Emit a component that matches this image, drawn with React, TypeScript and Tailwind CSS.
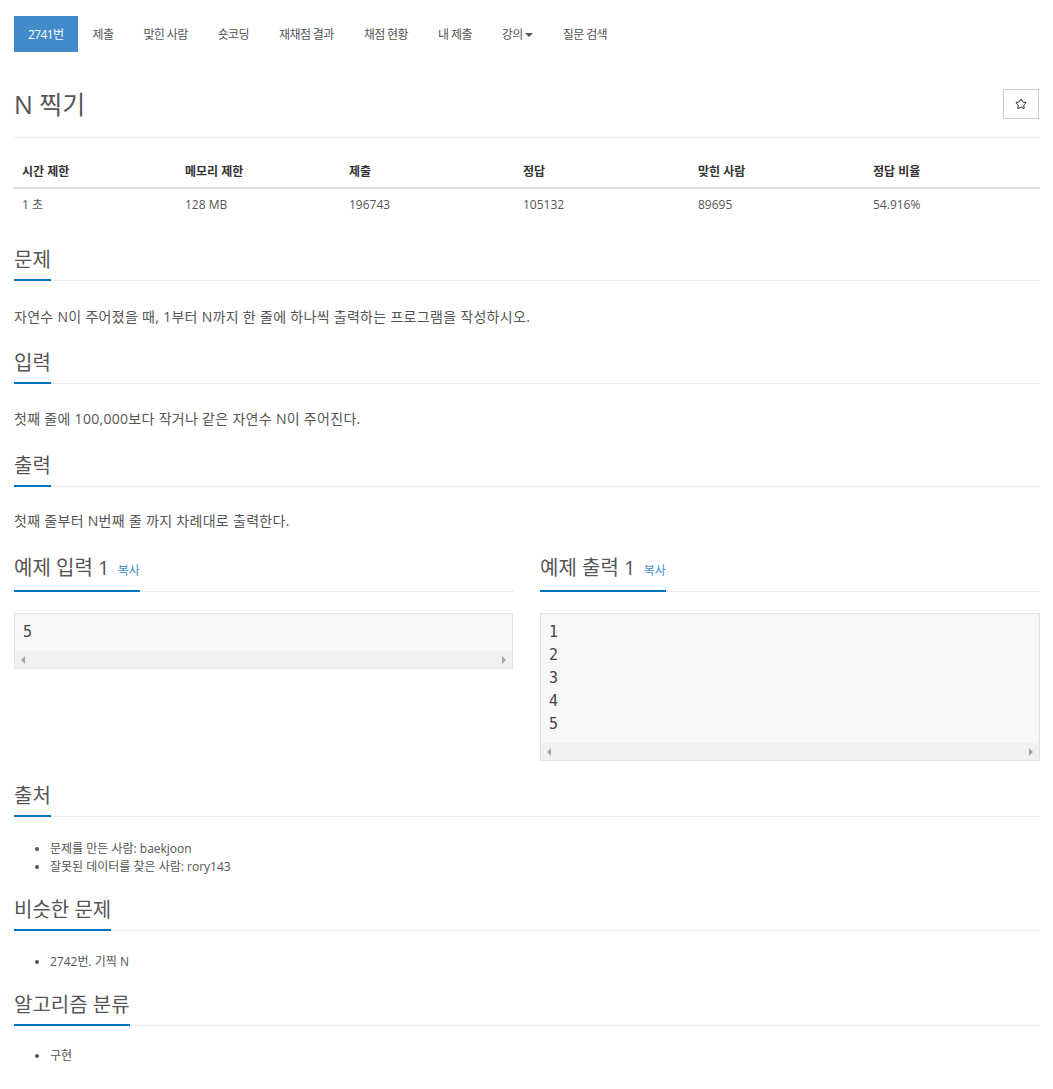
import { Star } from 'lucide-react'

const navItems = ['제출', '맞힌 사람', '숏코딩', '재채점 결과', '채점 현황', '내 제출', '강의', '질문 검색']

const stats = [
  { head: '시간 제한', value: '1 초', w: 'w-[163px]' },
  { head: '메모리 제한', value: '128 MB', w: 'w-[164px]' },
  { head: '제출', value: '196743', w: 'w-[174px]' },
  { head: '정답', value: '105132', w: 'w-[175px]' },
  { head: '맞힌 사람', value: '89695', w: 'w-[175px]' },
  { head: '정답 비율', value: '54.916%', w: 'flex-1' },
]

function Heading({ children, className = '' }: { children: React.ReactNode; className?: string }) {
  return (
    <div className={`flex border-b border-dotted border-[#ddd] ${className}`}>
      <h3 className="-mb-px border-b-2 border-[#0076c0] pb-[5px] text-[20px] leading-[28px] font-normal text-[#555]">
        {children}
      </h3>
    </div>
  )
}

function SampleBox({ lines }: { lines: string[] }) {
  return (
    <div className="mt-[21px] border border-[#e1e1e8] bg-[#f7f7f9]">
      <pre className="px-[8px] py-[7px] font-['DejaVu_Sans_Mono',monospace] text-[15px] leading-[23px] text-[#444]">
        {lines.join('\n')}
      </pre>
      <div className="flex h-[17px] items-center justify-between bg-[#f1f1f1] px-[6px]">
        <span className="h-0 w-0 border-y-[4px] border-r-[4px] border-y-transparent border-r-[#a3a3a3]" />
        <span className="h-0 w-0 border-y-[4px] border-l-[4px] border-y-transparent border-l-[#a3a3a3]" />
      </div>
    </div>
  )
}

export default function App() {
  return (
    <div className="min-h-screen bg-white pl-[14px] pr-[13px] font-['Open_Sans','Noto_Sans_CJK_KR',sans-serif] text-[#555]">
      {/* problem menu */}
      <ul className="mt-[16px] flex text-[12px] tracking-[-0.6px]">
        <li className="h-[36px] bg-[#428bca] px-[14px] leading-[37px] text-white">2741번</li>
        {navItems.map((item) => (
          <li key={item} className="flex h-[36px] items-center px-[15px] pt-px text-[#555]">
            {item}
            {item === '강의' && (
              <span className="ml-[2px] h-0 w-0 border-x-[4px] border-t-[4px] border-x-transparent border-t-[#555]" />
            )}
          </li>
        ))}
      </ul>

      {/* title */}
      <div className="mt-[37px] flex items-center justify-between border-b border-[#eee] pb-[18px]">
        <h1 className="text-[25px] leading-[30px] text-[#555]">N 찍기</h1>
        <button className="mr-px flex h-[30px] w-[36px] items-center justify-center border border-[#ccc] bg-white">
          <Star size={12} strokeWidth={2} className="text-[#222]" />
        </button>
      </div>

      {/* info table */}
      <div className="mt-[18px] text-[12px]">
        <div className="flex border-b-2 border-[#ddd]">
          {stats.map((s) => (
            <div key={s.head} className={`${s.w} px-[8px] py-[7px] leading-[17px] font-bold text-[#333]`}>
              {s.head}
            </div>
          ))}
        </div>
        <div className="flex">
          {stats.map((s) => (
            <div key={s.head} className={`${s.w} px-[8px] py-[8px] leading-[15px] text-[#555]`}>
              {s.value}
            </div>
          ))}
        </div>
      </div>

      <Heading className="mt-[26px]">문제</Heading>
      <p className="mt-[26px] text-[14px] leading-[20px] tracking-[0.3px]">
        자연수 N이 주어졌을 때, 1부터 N까지 한 줄에 하나씩 출력하는 프로그램을 작성하시오.
      </p>

      <Heading className="mt-[22px]">입력</Heading>
      <p className="mt-[25px] text-[14px] leading-[20px] tracking-[0.3px]">
        첫째 줄에 100,000보다 작거나 같은 자연수 N이 주어진다.
      </p>

      <Heading className="mt-[23px]">출력</Heading>
      <p className="mt-[24px] text-[14px] leading-[20px] tracking-[0.3px]">첫째 줄부터 N번째 줄 까지 차례대로 출력한다.</p>

      {/* samples */}
      <div className="mt-[23px] grid grid-cols-[499px_1fr] gap-[27px]">
        <div>
          <Heading>
            예제 입력 1 <span className="ml-[3px] text-[12px] text-[#428bca]">복사</span>
          </Heading>
          <SampleBox lines={['5']} />
        </div>
        <div>
          <Heading>
            예제 출력 1 <span className="ml-[3px] text-[12px] text-[#428bca]">복사</span>
          </Heading>
          <SampleBox lines={['1', '2', '3', '4', '5']} />
        </div>
      </div>

      <Heading className="mt-[21px]">출처</Heading>
      <ul className="mt-[23px] list-disc pl-[36px] text-[12px] leading-[18px]">
        <li>문제를 만든 사람: baekjoon</li>
        <li>잘못된 데이터를 찾은 사람: rory143</li>
      </ul>

      <Heading className="mt-[20px]">비슷한 문제</Heading>
      <ul className="mt-[22px] list-disc pl-[36px] text-[12px] leading-[18px]">
        <li>2742번. 기찍 N</li>
      </ul>

      <Heading className="mt-[20px]">알고리즘 분류</Heading>
      <ul className="mt-[21px] list-disc pl-[36px] text-[12px] leading-[18px]">
        <li>구현</li>
      </ul>
    </div>
  )
}
